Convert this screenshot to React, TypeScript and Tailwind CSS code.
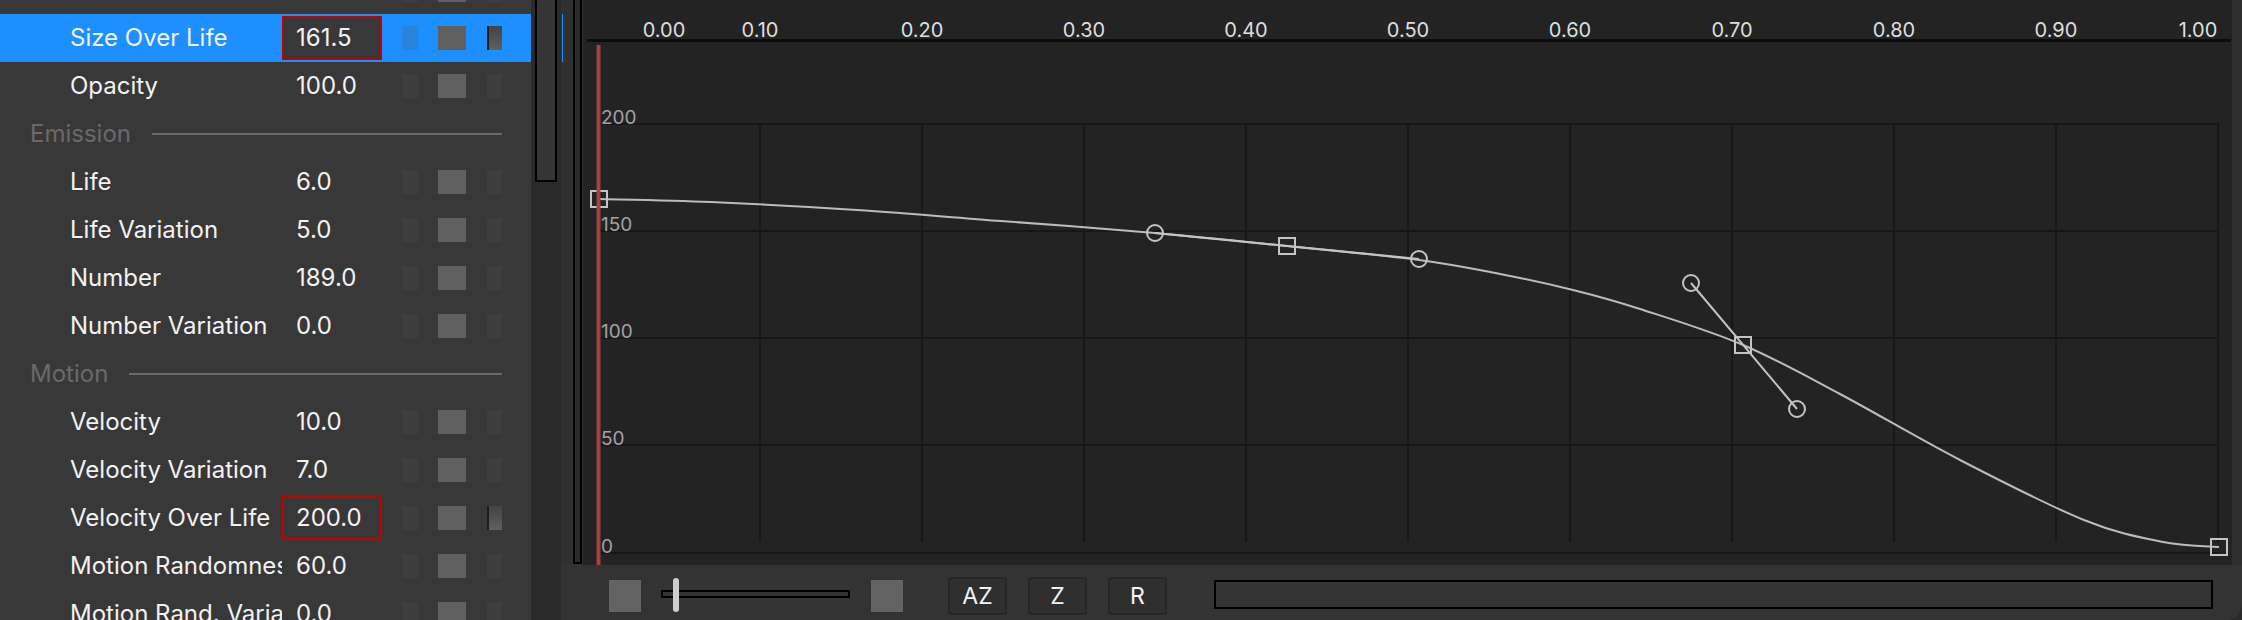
import React from "react";

type RowItem =
  | { kind: "row"; label: string; value: string; selected?: boolean; boxed?: boolean; grad?: boolean }
  | { kind: "section"; label: string }
  | { kind: "blank" };

const rows: RowItem[] = [
  { kind: "blank" },
  { kind: "row", label: "Size Over Life", value: "161.5", selected: true, boxed: true, grad: true },
  { kind: "row", label: "Opacity", value: "100.0" },
  { kind: "section", label: "Emission" },
  { kind: "row", label: "Life", value: "6.0" },
  { kind: "row", label: "Life Variation", value: "5.0" },
  { kind: "row", label: "Number", value: "189.0" },
  { kind: "row", label: "Number Variation", value: "0.0" },
  { kind: "section", label: "Motion" },
  { kind: "row", label: "Velocity", value: "10.0" },
  { kind: "row", label: "Velocity Variation", value: "7.0" },
  { kind: "row", label: "Velocity Over Life", value: "200.0", boxed: true, grad: true },
  { kind: "row", label: "Motion Randomness", value: "60.0" },
  { kind: "row", label: "Motion Rand. Variation", value: "0.0" },
];

function Swatches({ selected, grad }: { selected?: boolean; grad?: boolean }) {
  return (
    <div className="flex items-center ml-[20px]">
      <div className={selected ? "w-[16px] h-[24px] bg-[#2b84dc]" : "w-[16px] h-[24px] bg-[#3e3e3e]"} />
      <div className="ml-[20px] w-[28px] h-[24px] bg-[#606060]" />
      <div
        className={
          grad
            ? "ml-[21px] w-[15px] h-[24px] border-l-2 border-[#1c1c1c] bg-linear-to-b from-[#444444] to-[#5f5f5f]"
            : "ml-[21px] w-[15px] h-[24px] bg-[#3e3e3e]"
        }
      />
    </div>
  );
}

function Sidebar() {
  return (
    <div className="w-[531px] h-[620px] shrink-0 bg-[#383838] overflow-hidden">
      <div className="-mt-[34px] flex flex-col">
        {rows.map((r, i) => {
          if (r.kind === "blank") {
            return (
              <div key={i} className="h-[48px] flex items-center pl-[382px]">
                <Swatches />
              </div>
            );
          }
          if (r.kind === "section") {
            return (
              <div key={i} className="h-[48px] flex items-center pl-[30px] pr-[29px]">
                <span className="text-[24px] leading-[30px] text-[#6a6a6a]">{r.label}</span>
                <div className="flex-1 ml-[21px] h-[2px] bg-[#6a6a6a]" />
              </div>
            );
          }
          return (
            <div
              key={i}
              className={
                r.selected
                  ? "h-[48px] flex items-center pl-[70px] bg-[#1e8fff]"
                  : "h-[48px] flex items-center pl-[70px]"
              }
            >
              <div className="w-[212px] h-[32px] overflow-hidden whitespace-nowrap text-[24px] leading-[32px] text-[#f2f2f2]">
                {r.label}
              </div>
              <div
                className={
                  r.boxed
                    ? "w-[100px] h-[44px] flex items-center pl-[12px] border-2 border-[#c40000] bg-[#383838] text-[24px] leading-[30px] text-[#f2f2f2]"
                    : "w-[100px] h-[44px] flex items-center pl-[12px] border-2 border-transparent text-[24px] leading-[30px] text-[#f2f2f2]"
                }
              >
                {r.value}
              </div>
              <Swatches selected={r.selected} grad={r.grad} />
            </div>
          );
        })}
      </div>
    </div>
  );
}

const curvePts: [number, number][] = [
  [599, 199],
  [711, 202],
  [857, 210],
  [1001, 221],
  [1155, 233],
  [1287, 246],
  [1419, 260],
  [1500, 274],
  [1573, 290],
  [1640, 309],
  [1743, 345],
  [1840, 394],
  [1960, 460],
  [2084, 520],
  [2163, 542],
  [2219, 547],
];

function catmull(p: [number, number][]) {
  let d = `M${p[0][0]},${p[0][1]}`;
  for (let i = 0; i < p.length - 1; i++) {
    const p0 = p[i - 1] ?? p[i];
    const p1 = p[i];
    const p2 = p[i + 1];
    const p3 = p[i + 2] ?? p[i + 1];
    const c1x = p1[0] + (p2[0] - p0[0]) / 6;
    const c1y = p1[1] + (p2[1] - p0[1]) / 6;
    const c2x = p2[0] - (p3[0] - p1[0]) / 6;
    const c2y = p2[1] - (p3[1] - p1[1]) / 6;
    d += ` C${c1x.toFixed(1)},${c1y.toFixed(1)} ${c2x.toFixed(1)},${c2y.toFixed(1)} ${p2[0]},${p2[1]}`;
  }
  return d;
}

const rulerLabels: [number, string][] = [
  [664, "0.00"],
  [760, "0.10"],
  [922, "0.20"],
  [1084, "0.30"],
  [1246, "0.40"],
  [1408, "0.50"],
  [1570, "0.60"],
  [1732, "0.70"],
  [1894, "0.80"],
  [2056, "0.90"],
  [2198, "1.00"],
];

const axisLabels: [number, string][] = [
  [124, "200"],
  [231, "150"],
  [338, "100"],
  [445, "50"],
  [553, "0"],
];

const hLines = [124, 231, 338, 445, 553];
const vLines = [760, 922, 1084, 1246, 1408, 1570, 1732, 1894, 2056, 2218];

const keys: [number, number][] = [
  [599, 199],
  [1287, 246],
  [1743, 345],
  [2219, 547],
];

const handles: [number, number][] = [
  [1155, 233],
  [1419, 259],
  [1691, 283],
  [1797, 409],
];

function Graph() {
  return (
    <div className="relative w-[1649px] h-[565px] shrink-0 bg-[#232323] overflow-hidden">
      <svg className="absolute inset-0" width={1649} height={565} viewBox="0 0 1649 565">
        <g transform="translate(-583 0)" fontFamily="Inter, 'Noto Sans', sans-serif">
          {rulerLabels.map(([x, t]) => (
            <text key={t} x={x} y={37} textAnchor="middle" fontSize={20} fill="#dedede">
              {t}
            </text>
          ))}
          <rect x={587} y={39} width={1644} height={3} fill="#0c0c0c" />
          {vLines.map((x) => (
            <line key={x} x1={x} y1={124} x2={x} y2={542} stroke="#171717" strokeWidth={2} />
          ))}
          {hLines.map((y) => (
            <line key={y} x1={598} y1={y} x2={2219} y2={y} stroke="#171717" strokeWidth={2} />
          ))}
          {axisLabels.map(([y, t]) => (
            <text key={t} x={601} y={y} fontSize={19} fill="#a2a2a2">
              {t}
            </text>
          ))}
          <path d={catmull(curvePts)} fill="none" stroke="#bcbcbc" strokeWidth={2} />
          <line x1={1155} y1={233} x2={1419} y2={259} stroke="#c4c4c4" strokeWidth={2} />
          <line x1={1691} y1={283} x2={1797} y2={409} stroke="#c4c4c4" strokeWidth={2} />
          {handles.map(([x, y], i) => (
            <circle key={i} cx={x} cy={y} r={8} fill="none" stroke="#c4c4c4" strokeWidth={2} />
          ))}
          {keys.map(([x, y], i) => (
            <rect key={i} x={x - 8} y={y - 8} width={16} height={16} fill="none" stroke="#c4c4c4" strokeWidth={2} />
          ))}
          <rect x={596.5} y={45} width={4} height={522} fill="#a24242" />
        </g>
      </svg>
    </div>
  );
}

function ToolButton({ label, first }: { label: string; first?: boolean }) {
  return (
    <div
      className={
        (first ? "ml-[45px] " : "ml-[21px] ") +
        "w-[59px] h-[38px] flex items-center justify-center rounded-[3px] border-2 border-[#252525] bg-[#2f2f2f] text-[23px] leading-[28px] text-[#f4f4f4]"
      }
    >
      {label}
    </div>
  );
}

function Toolbar() {
  return (
    <div className="h-[55px] flex items-center pt-[6px] pl-[48px]">
      <div className="w-[32px] h-[32px] bg-[#636363]" />
      <div className="relative ml-[20px] mb-[4px] w-[189px] h-[8px] border-2 border-black">
        <div className="absolute left-[10px] -top-[14px] w-[6px] h-[34px] rounded-full bg-[#cdcdcd]" />
      </div>
      <div className="ml-[21px] w-[32px] h-[32px] bg-[#636363]" />
      <ToolButton label="AZ" first />
      <ToolButton label="Z" />
      <ToolButton label="R" />
      <div className="ml-[47px] mb-[2px] w-[999px] h-[29px] border-2 border-black" />
    </div>
  );
}

export default function App() {
  return (
    <div className="flex w-[2242px] h-[620px] overflow-hidden bg-[#2a2a2a] font-['Inter','Noto_Sans',sans-serif]">
      <Sidebar />
      <div className="w-[30px] h-[620px] shrink-0 bg-[#2a2a2a] pl-[4px]">
        <div className="w-[22px] h-[182px] border-x-2 border-b-2 border-black bg-[#363636]" />
      </div>
      <div className="flex flex-col w-[1681px] h-[620px] shrink-0 bg-[#333333] rounded-br-[16px] overflow-hidden">
        <div className="flex h-[565px]">
          <div className="relative w-[22px] h-[565px] shrink-0 bg-[#303030] pl-[12px]">
            <div className="absolute left-[1px] top-[14px] w-[1px] h-[48px] bg-[#1e8fff]" />
            <div className="w-[9px] h-[564px] border-x-2 border-b-2 border-black bg-[#2a2a2a]" />
          </div>
          <Graph />
          <div className="w-[10px] h-[565px] shrink-0 bg-[#2e2e2e]" />
        </div>
        <Toolbar />
      </div>
    </div>
  );
}
